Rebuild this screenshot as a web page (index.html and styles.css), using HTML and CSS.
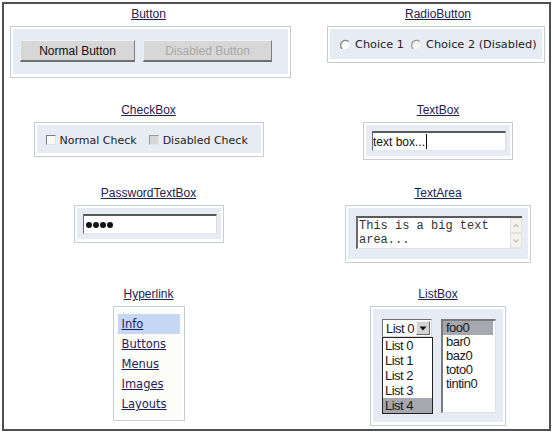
FILE: index.html
```html
<!DOCTYPE html>
<html lang="en">
	<head>
		<meta charset="utf-8">
		<title>Widget Gallery</title>
		<meta name="viewport" content="width=device-width, initial-scale=1">
		<link rel="stylesheet" href="styles.css">
	</head>
	<body>
		<div class="frame">
			<div class="gallery">

				<section class="cell">
					<a class="title" href="#button">Button</a>
					<div class="panel panel-button">
						<div class="fill">
							<button class="btn btn-normal">Normal Button</button>
							<button class="btn btn-disabled" disabled>Disabled Button</button>
						</div>
					</div>
				</section>

				<section class="cell cell-right">
					<a class="title" href="#radio">RadioButton</a>
					<div class="panel panel-radio">
						<div class="fill">
							<label class="choice">
								<svg class="radio" viewBox="0 0 13 13" width="13" height="13"><circle cx="6.5" cy="6.5" r="4.6" fill="#fff"/><path d="M4.2 10.8 A4.8 4.8 0 0 1 10.6 3.6" fill="none" stroke="#858585" stroke-width="1.3"/></svg>
								Choice 1
							</label>
							<label class="choice">
								<svg class="radio" viewBox="0 0 13 13" width="13" height="13"><circle cx="6.5" cy="6.5" r="4.6" fill="#f4f4f4"/><path d="M4.2 10.8 A4.8 4.8 0 0 1 10.6 3.6" fill="none" stroke="#9a9a9a" stroke-width="1.3"/></svg>
								Choice 2 (Disabled)
							</label>
						</div>
					</div>
				</section>

				<section class="cell">
					<a class="title" href="#checkbox">CheckBox</a>
					<div class="panel panel-check">
						<div class="fill">
							<label class="check"><span class="box"></span>Normal Check</label>
							<label class="check"><span class="box box-disabled"></span>Disabled Check</label>
						</div>
					</div>
				</section>

				<section class="cell cell-right">
					<a class="title" href="#textbox">TextBox</a>
					<div class="panel panel-field">
						<div class="fill">
							<div class="field">text box...<span class="caret"></span></div>
						</div>
					</div>
				</section>

				<section class="cell">
					<a class="title" href="#password">PasswordTextBox</a>
					<div class="panel panel-field">
						<div class="fill">
							<div class="field">
								<span class="dots"><i class="dot"></i><i class="dot"></i><i class="dot"></i><i class="dot"></i></span>
							</div>
						</div>
					</div>
				</section>

				<section class="cell cell-right">
					<a class="title" href="#textarea">TextArea</a>
					<div class="panel panel-area">
						<div class="fill">
							<div class="area">
								<div class="area-text">This is a big text area...</div>
								<div class="scroll">
									<div class="arrow"><svg viewBox="0 0 10 13" width="10" height="13"><path d="M2.5 8 L5 5.5 L7.5 8" fill="none" stroke="#bdbdbd" stroke-width="1.2"/></svg></div>
									<div class="arrow"><svg viewBox="0 0 10 13" width="10" height="13"><path d="M2.5 5.5 L5 8 L7.5 5.5" fill="none" stroke="#bdbdbd" stroke-width="1.2"/></svg></div>
								</div>
							</div>
						</div>
					</div>
				</section>

				<section class="cell">
					<a class="title" href="#hyperlink">Hyperlink</a>
					<div class="panel panel-links">
						<div class="fill">
							<a class="link link-active" href="#info">Info</a>
							<a class="link" href="#buttons">Buttons</a>
							<a class="link" href="#menus">Menus</a>
							<a class="link" href="#images">Images</a>
							<a class="link" href="#layouts">Layouts</a>
						</div>
					</div>
				</section>

				<section class="cell cell-right">
					<a class="title" href="#listbox">ListBox</a>
					<div class="panel panel-list">
						<div class="fill">
							<div class="drop">
								<div class="select">
									List 0
									<span class="select-arrow"><svg viewBox="0 0 8 5" width="8" height="5"><path d="M0.5 0.5 H7.5 L4 4.5 Z" fill="#111"/></svg></span>
								</div>
								<div class="popup">
									<div class="option">List 0</div>
									<div class="option">List 1</div>
									<div class="option">List 2</div>
									<div class="option">List 3</div>
									<div class="option option-selected">List 4</div>
								</div>
							</div>
							<div class="listbox">
								<div class="item item-selected">foo0</div>
								<div class="item">bar0</div>
								<div class="item">baz0</div>
								<div class="item">toto0</div>
								<div class="item">tintin0</div>
							</div>
						</div>
					</div>
				</section>

			</div>
		</div>
	</body>
</html>
```

FILE: styles.css
```css
* {
	box-sizing: border-box;
}
html,
body {
	margin: 0;
	padding: 0;
	background: #fff;
	font-family: "Liberation Sans", Arial, sans-serif;
}
.frame {
	margin: 2px 0 0 2px;
	width: 549px;
	height: 429px;
	border: 2px solid #505050;
}
.gallery {
	display: grid;
	grid-template-columns: 289px 1fr;
	grid-template-rows: 96px 83px 101px auto;
	padding-top: 3px;
}
.cell {
	display: flex;
	flex-direction: column;
	align-items: center;
}
.cell-right {
	padding-left: 34px;
}
.title {
	font-size: 12px;
	line-height: 14px;
	color: #22224f;
	text-decoration: underline;
	margin-bottom: 5px;
}

/* panel: thin border, white rim, pale blue fill */
.panel {
	display: flex;
	flex-direction: column;
	border: 1px solid #c6cdd6;
	background: #fff;
	padding: 2px 2px 3px;
}
.fill {
	flex: 1;
	display: flex;
	background: #e7ecf4;
}

/* buttons */
.panel-button {
	width: 281px;
	height: 52px;
	margin-left: 4px;
}
.panel-button .fill {
	padding: 11px 0 0 7px;
	gap: 8px;
	align-items: flex-start;
}
.btn {
	height: 22px;
	padding: 0;
	font: 12px "Liberation Sans", Arial, sans-serif;
	color: #111;
	background: #d7d7d7;
	border-style: solid;
	border-width: 1px 1px 2px 1px;
	border-color: #f3f3f3 #7d7d7d #6e6e6e #eeeeee;
	appearance: none;
}
.btn-normal {
	width: 115px;
}
.btn-disabled {
	width: 129px;
	color: #a9a9a9;
}

/* radio buttons */
.panel-radio {
	width: 218px;
	height: 37px;
	margin-right: 4px;
}
.panel-radio .fill {
	align-items: center;
	padding-left: 8px;
	gap: 5px;
}
.choice {
	display: flex;
	align-items: center;
	gap: 4px;
	font: 11.3px "DejaVu Sans", Verdana, sans-serif;
	color: #222;
	white-space: nowrap;
}
.radio {
	display: block;
}

/* check boxes */
.panel-check {
	width: 230px;
	height: 35px;
}
.panel-check .fill {
	align-items: center;
	padding: 2px 0 0 9px;
	gap: 12px;
}
.check {
	display: flex;
	align-items: center;
	gap: 4px;
	font: 11px "DejaVu Sans", Verdana, sans-serif;
	color: #222;
	white-space: nowrap;
}
.box {
	width: 10px;
	height: 10px;
	background: #fafafa;
	border: 1px solid;
	border-color: #7a7a7a #e2e2e2 #e2e2e2 #7a7a7a;
}
.box-disabled {
	background: #d6d6d6;
	border-color: #9a9a9a #e6e6e6 #e6e6e6 #9a9a9a;
}

/* text boxes */
.panel-field {
	width: 150px;
	height: 38px;
}
.panel-field .fill {
	padding: 6px 0 0 6px;
}
.field {
	width: 134px;
	height: 20px;
	display: flex;
	align-items: center;
	background: #fff;
	border-style: solid;
	border-width: 2px 1px 1px 1px;
	border-color: #595959 #dcdcdc #e6e6e6 #6a6a6a;
	font-size: 12px;
	color: #111;
}
.caret {
	width: 1px;
	height: 15px;
	margin-left: 1px;
	background: #111;
}
.dots {
	display: flex;
	gap: 1px;
	padding-left: 2px;
}
.dot {
	width: 6px;
	height: 6px;
	border-radius: 50%;
	background: #111;
}

/* text area */
.panel-area {
	width: 186px;
	height: 58px;
}
.panel-area .fill {
	padding: 8px 0 0 8px;
}
.area {
	width: 166px;
	height: 33px;
	display: flex;
	background: #fff;
	border-style: solid;
	border-width: 2px 0 1px 2px;
	border-color: #5a5a5a #e4e4e4 #e4e4e4 #6a6a6a;
}
.area-text {
	flex: 1;
	padding: 1px 0 0 1px;
	font: 12px/14px "Liberation Mono", "Courier New", monospace;
	color: #333;
}
.scroll {
	width: 12px;
	display: flex;
	flex-direction: column;
}
.arrow {
	height: 15px;
	display: flex;
	justify-content: center;
	background: #f3f2ec;
	border: 1px solid #e3e2db;
}

/* hyperlinks */
.panel-links {
	width: 72px;
	height: 115px;
}
.panel-links .fill {
	flex-direction: column;
	padding: 5px 0 0 2px;
	background: #fcfcf9;
}
.link {
	width: 62px;
	height: 20px;
	display: flex;
	align-items: center;
	padding-left: 4px;
	font: 11.5px "DejaVu Sans", Verdana, sans-serif;
	color: #1e1e5c;
	text-decoration: underline;
}
.link-active {
	background: #c6d7f6;
}

/* list boxes */
.panel-list {
	width: 136px;
	height: 120px;
}
.panel-list .fill {
	padding: 10px 0 0 9px;
	gap: 8px;
	align-items: flex-start;
}
.drop,
.listbox {
	font-size: 13px;
	letter-spacing: -0.5px;
	color: #1a1a1a;
}
.drop {
	width: 51px;
	display: flex;
	flex-direction: column;
}
.select {
	width: 50px;
	height: 18px;
	display: flex;
	align-items: center;
	justify-content: space-between;
	padding: 0 1px 0 3px;
	background: #fff;
	border: 1px solid;
	border-color: #6f6f6f #d8d8d8 #d8d8d8 #6f6f6f;
}
.select-arrow {
	width: 14px;
	height: 14px;
	display: flex;
	align-items: center;
	justify-content: center;
	background: #d4d4d4;
	border: 1px solid;
	border-color: #f0f0f0 #6a6a6a #6a6a6a #f0f0f0;
}
.popup {
	width: 51px;
	background: #fff;
	border: 1px solid #222;
}
.option {
	height: 15px;
	line-height: 15px;
	padding-left: 2px;
}
.option-selected {
	background: #a7a7af;
}
.listbox {
	width: 55px;
	height: 94px;
	background: #fff;
	border-style: solid;
	border-width: 2px 1px 1px 2px;
	border-color: #7a7a7a #e0e0e0 #e0e0e0 #7a7a7a;
}
.item {
	width: 50px;
	height: 14px;
	line-height: 14px;
	padding-left: 3px;
}
.item-selected {
	background: #a7a7af;
}
```
